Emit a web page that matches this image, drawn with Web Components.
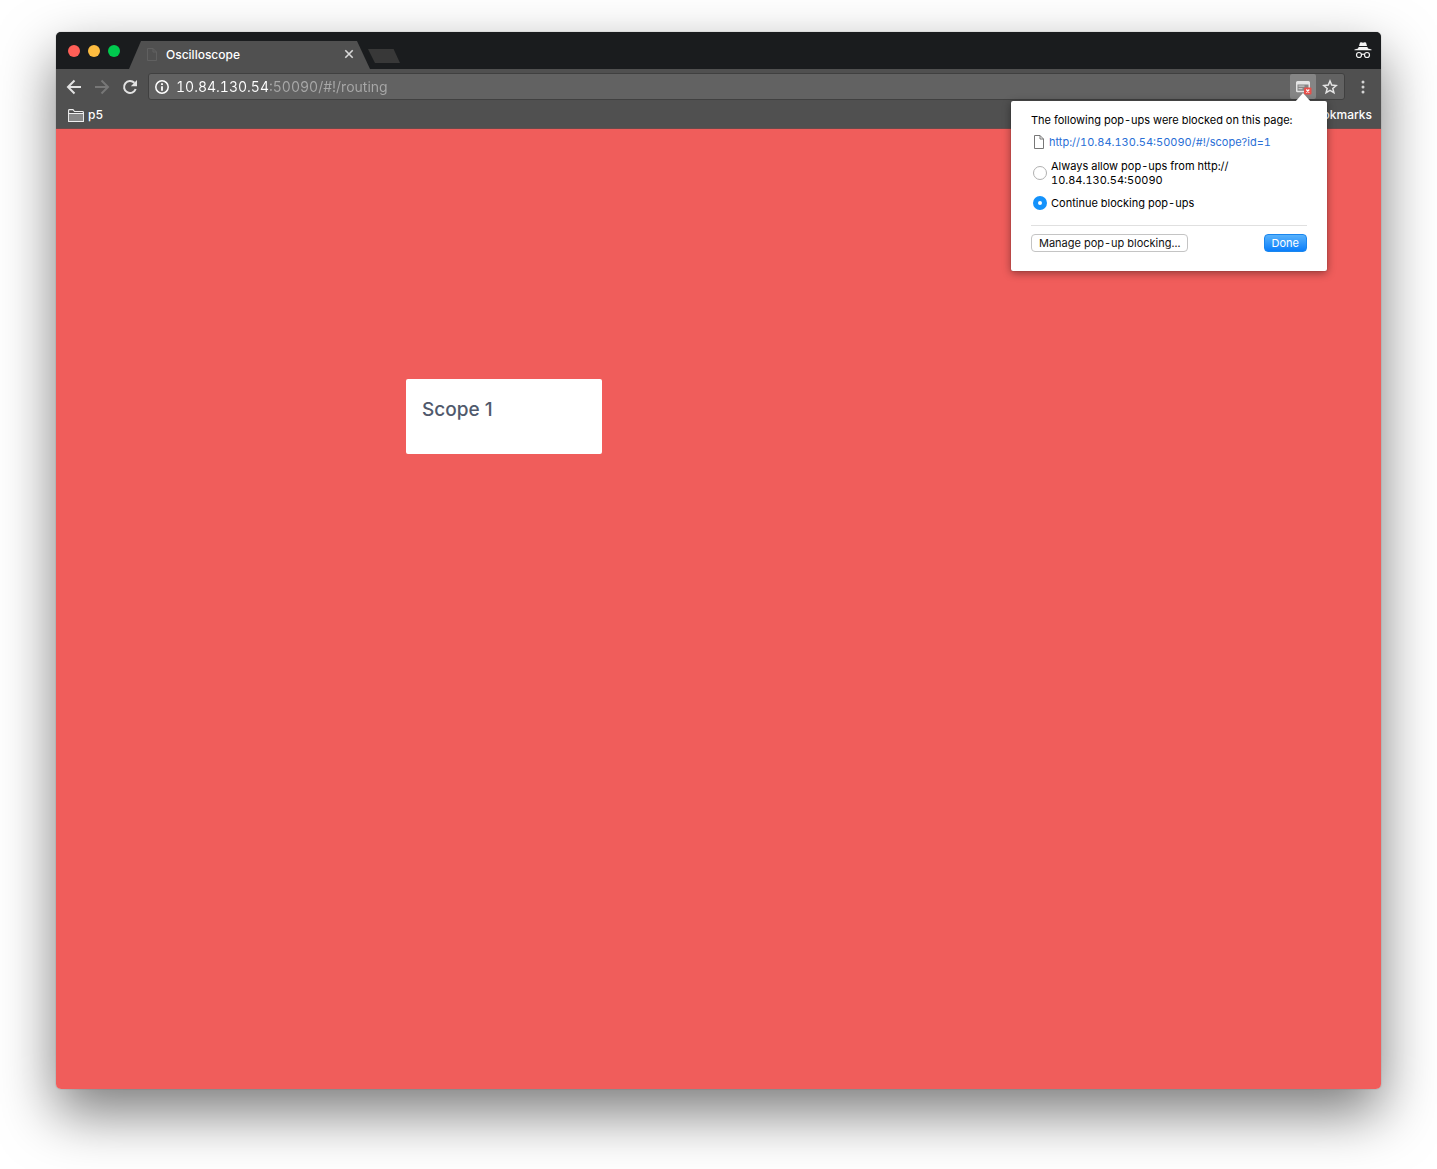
<!DOCTYPE html>
<html lang="en">
<head>
<meta charset="utf-8">
<title>Oscilloscope</title>
<style>
  body { margin: 0; background: #fff; font-family: Inter, "Liberation Sans", sans-serif; font-variant-numeric: tabular-nums; }
</style>
</head>
<body>
<browser-window>
  <tab-strip slot="tabs"><browser-tab>Oscilloscope</browser-tab></tab-strip>
  <address-bar slot="toolbar" value="10.84.130.54:50090/#!/routing"></address-bar>
  <bookmarks-bar slot="bookmarks">
    <bookmark-folder>p5</bookmark-folder>
    <bookmark-folder slot="end">Bookmarks</bookmark-folder>
  </bookmarks-bar>
  <routing-canvas><scope-card>Scope 1</scope-card></routing-canvas>
  <popup-bubble slot="bubble"></popup-bubble>
</browser-window>

<script>
const define = (name, html) => {
  const template = document.createElement('template');
  template.innerHTML = html;
  customElements.define(name, class extends HTMLElement {
    constructor() {
      super();
      this.attachShadow({ mode: 'open' }).append(template.content.cloneNode(true));
    }
    connectedCallback() {
      const field = this.shadowRoot.querySelector('[data-value]');
      if (field && this.hasAttribute('value')) field.value = this.getAttribute('value');
    }
  });
};

define('browser-window', `
  <style>
    :host { display: flex; padding: 32px 56px 80px; min-height: 100vh; box-sizing: border-box; overflow: hidden; }
    .frame { position: relative; flex: 1; min-width: 0; display: flex; flex-direction: column; border-radius: 5px;
      box-shadow: 0 0 1px rgba(0,0,0,.5), 0 24px 56px rgba(0,0,0,.52); }
    header { background: #505050; border-radius: 5px 5px 0 0; border-bottom: 1px solid #6a4b4b; }
    main { flex: 1; display: flex; }
  </style>
  <div class="frame">
    <header><slot name="tabs"></slot><slot name="toolbar"></slot><slot name="bookmarks"></slot></header>
    <main><slot></slot></main>
    <slot name="bubble"></slot>
  </div>`);

define('tab-strip', `
  <style>
    :host { display: flex; align-items: flex-end; height: 37px; background: #1a1c1e; border-radius: 5px 5px 0 0; }
    .lights { display: flex; gap: 8px; align-self: center; padding-left: 12px; width: 61px; }
    .lights button { width: 12px; height: 12px; border: 0; padding: 0; border-radius: 50%; }
    .close { background: #ff5f57; } .min { background: #fdbc40; } .zoom { background: #00ca4e; }
    .new { border: 0; padding: 0; margin-left: -2px; width: 32px; height: 14px; align-self: center; margin-top: 11px; background: #383838;
      clip-path: polygon(0 0, 80% 0, 100% 100%, 22% 100%); }
    .incognito { margin: 0 9px 9px auto; width: 18px; height: 18px; }
  </style>
  <div class="lights">
    <button class="close" aria-label="Close window"></button><button class="min" aria-label="Minimize"></button><button class="zoom" aria-label="Full screen"></button>
  </div>
  <slot></slot>
  <button class="new" aria-label="New tab"></button>
  <svg class="incognito" viewBox="0 0 18 18" fill="#f4f4f4">
    <path d="M6 .6 7.500.2 9 .8 10.500.2 12 .6 13 4H5Z"/><path d="M4.600 5H13.400L14 6.600 17.500 7.400V8.200H.5V7.400L4 6.600Z"/>
    <g fill="none" stroke="#f4f4f4" stroke-width="1.200"><circle cx="5" cy="13" r="2.500"/><circle cx="13" cy="13" r="2.500"/><path d="M7.500 12.600Q9 11.600 10.500 12.600"/></g>
  </svg>`);

define('browser-tab', `
  <style>
    :host { display: flex; align-items: center; box-sizing: border-box; width: 241px; height: 28px; padding: 0 15px 2px 18px; background: #505050;
      clip-path: polygon(0 100%, 12px 0, 228px 0, 100% 100%); color: #fff; font-size: 12px; font-weight: 500; }
    .title { flex: 1; margin-left: 9px; }
    button { width: 12px; height: 12px; padding: 0; border: 0; background: none; display: flex; }
  </style>
  <svg width="10" height="13" viewBox="0 0 10 13" fill="none" stroke="#606060"><path d="M.5.500H6L9.500 4V12.500H.500ZM6 .500V4H9.500"/></svg>
  <span class="title"><slot></slot></span>
  <button aria-label="Close tab"><svg width="12" height="12" viewBox="0 0 12 12" stroke="#d8d8d8" stroke-width="1.600"><path d="M2.300 2.300 9.700 9.700M9.700 2.300 2.300 9.700"/></svg></button>`);

define('address-bar', `
  <style>
    :host { display: flex; align-items: center; height: 35px; padding: 0 10px; }
    button { border: 0; padding: 0; background: none; display: flex; align-items: center; justify-content: center; width: 16px; height: 16px; }
    nav { display: flex; gap: 12px; }
    .box { flex: 1; min-width: 0; display: flex; align-items: center; height: 25px; margin-left: 10px; border: 1px solid #404040; border-radius: 3px; background: #626262; }
    .info { margin-left: 5px; }
    input { flex: 1; min-width: 0; margin: 0 0 0 6px; padding: 0; border: 0; outline: 0; height: 22px; font: 14px Inter, "Liberation Sans", sans-serif; font-variant-numeric: tabular-nums;
      color: transparent; background: linear-gradient(90deg, #fff 92px, #a8a8a8 92px); -webkit-background-clip: text; background-clip: text; }
    .box .blocked { width: 26px; height: 25px; background: #858585; border-radius: 2px; }
    .box .star { width: 28px; height: 25px; }
    .menu { margin-left: 10px; }
  </style>
  <nav>
    <button aria-label="Back"><svg width="16" height="16" viewBox="0 0 16 16" fill="none" stroke="#e2e2e2" stroke-width="2"><path d="M15 8H2.500M8.500 1.500 2 8l6.500 6.500"/></svg></button>
    <button aria-label="Forward"><svg width="16" height="16" viewBox="0 0 16 16" fill="none" stroke="#777" stroke-width="2"><path d="M1 8H13.500M7.500 1.500 14 8l-6.500 6.500"/></svg></button>
    <button aria-label="Reload"><svg width="16" height="16" viewBox="0 0 16 16"><path d="M13.700 10A6 6 0 1 1 12.400 3.800" fill="none" stroke="#e2e2e2" stroke-width="2"/><path d="M15 1V7.200H8.800Z" fill="#e2e2e2"/></svg></button>
  </nav>
  <div class="box">
    <button class="info" aria-label="Site information"><svg width="16" height="16" viewBox="0 0 16 16"><circle cx="8" cy="8" r="6.200" fill="none" stroke="#fff" stroke-width="1.500"/><path d="M7.100 7.200H8.900V11.800H7.100ZM7.100 4.200H8.900V6H7.100Z" fill="#fff"/></svg></button>
    <input data-value type="text" aria-label="Address" spellcheck="false">
    <button class="blocked" aria-label="Pop-ups blocked"><svg width="18" height="18" viewBox="0 0 18 18"><path fill-rule="evenodd" d="M3.500 3H14.500Q16 3 16 4.500V13Q16 14.300 14.500 14.300H3.500Q2 14.300 2 13V4.500Q2 3 3.500 3ZM3.500 6.500V12.800H14.500V6.500Z" fill="#e4e4e4"/><path d="M4.500 7.500h6v1.300h-6Zm0 2.500h4v1.300h-4Z" fill="#c8c8c8"/><rect x="10" y="9.500" width="7.500" height="7" rx="1" fill="#e8504a"/><path d="m12.300 11.500 3 3m0-3-3 3" stroke="#fff" stroke-width="1.200"/></svg></button>
    <button class="star" aria-label="Bookmark this page"><svg width="16" height="16" viewBox="0 0 16 16" fill="none" stroke="#e4e4e4" stroke-width="1.500"><path d="M8 2 9.700 6.100 14.200 6.500 10.800 9.400 11.900 13.700 8 11.400 4.100 13.700 5.200 9.400 1.800 6.500 6.300 6.100Z"/></svg></button>
  </div>
  <button class="menu" aria-label="Menu"><svg width="16" height="16" viewBox="0 0 16 16" fill="#d4d4d4"><circle cx="8" cy="3" r="1.500"/><circle cx="8" cy="8" r="1.500"/><circle cx="8" cy="13" r="1.500"/></svg></button>`);

define('bookmarks-bar', `
  <style>
    :host { display: flex; justify-content: space-between; align-items: flex-start; height: 24px; padding: 0 9px 0 12px; }
  </style>
  <slot></slot><slot name="end"></slot>`);

define('bookmark-folder', `
  <style>
    :host { display: flex; }
    a { display: flex; align-items: center; gap: 4px; color: #fff; text-decoration: none; font-size: 12px; line-height: 22px; font-weight: 500; }
  </style>
  <a href="#"><svg width="16" height="13" viewBox="0 0 16 13"><path d="M.6 12.400V1.500Q.6.6 1.500.6H5L6.500 2.500H14.500Q15.400 2.500 15.400 3.400V12.400Z" fill="#505050" stroke="#f0f0f0" stroke-width="1.100"/><path d="M1 4.500H15V12H1Z" fill="#888"/><path d="M.6 4.500H15.400" stroke="#f0f0f0"/></svg><slot></slot></a>`);

define('routing-canvas', `
  <style>:host { display: block; flex: 1; position: relative; background: #f05d5b; border-radius: 0 0 5px 5px; }</style>
  <slot></slot>`);

define('scope-card', `
  <style>
    :host { display: block; position: absolute; left: 350px; top: 250px; box-sizing: border-box; width: 196px; min-height: 75px; padding: 16px; background: #fff; border-radius: 2px; }
    h2 { margin: 0; font-size: 19px; line-height: 30px; font-weight: 500; color: #50596c; font-variant-numeric: normal; }
  </style>
  <h2><slot></slot></h2>`);

define('popup-bubble', `
  <style>
    :host { display: block; position: absolute; top: 69px; right: 54px; width: 316px; box-sizing: border-box; padding: 12px 20px 19px; background: #fff; border-radius: 2px;
      box-shadow: 0 2px 8px rgba(0,0,0,.4), 0 0 1px rgba(0,0,0,.5); font-size: 11px; line-height: 14px; color: #000; }
    .arrow { position: absolute; right: 16px; top: -8px; }
    p { margin: 0; }
    a { display: flex; align-items: center; gap: 5px; margin: 8px 0 10px 3px; color: #2a6fd6; text-decoration: none; }
    label { display: flex; align-items: center; gap: 4px; margin: 0 0 9px 2px; }
    input { appearance: none; box-sizing: border-box; width: 14px; height: 14px; margin: 0; border: 1px solid #b0b0b0; border-radius: 50%; background: #fff; flex: none; }
    input:checked { border: 5px solid #1492fb; }
    footer { display: flex; justify-content: space-between; margin-top: 15px; padding-top: 8px; border-top: 1px solid #e0e0e0; }
    button { box-sizing: border-box; height: 18px; padding: 0 7px; border: 1px solid #c4c4c4; border-radius: 4px; background: #fff; font: inherit; line-height: 16px; color: #111; }
    .done { color: #fff; border-color: #1a86ee; background: linear-gradient(#58b2fc, #0a7efb); }
  </style>
  <svg class="arrow" width="16" height="9" viewBox="0 0 16 9"><path d="M0 9 8 0l8 9Z" fill="#fff"/></svg>
  <p>The following pop-ups were blocked on this page:</p>
  <a href="#"><svg width="10" height="14" viewBox="0 0 10 14" fill="#fff" stroke="#777"><path d="M.5.500H6L9.500 4V13.500H.500ZM6 .500V4H9.500"/></svg>http://10.84.130.54:50090/#!/scope?id=1</a>
  <label><input type="radio" name="policy"><span>Always allow pop-ups from http://<br>10.84.130.54:50090</span></label>
  <label><input type="radio" name="policy" checked><span>Continue blocking pop-ups</span></label>
  <footer><button>Manage pop-up blocking...</button><button class="done">Done</button></footer>`);
</script>
</body>
</html>
